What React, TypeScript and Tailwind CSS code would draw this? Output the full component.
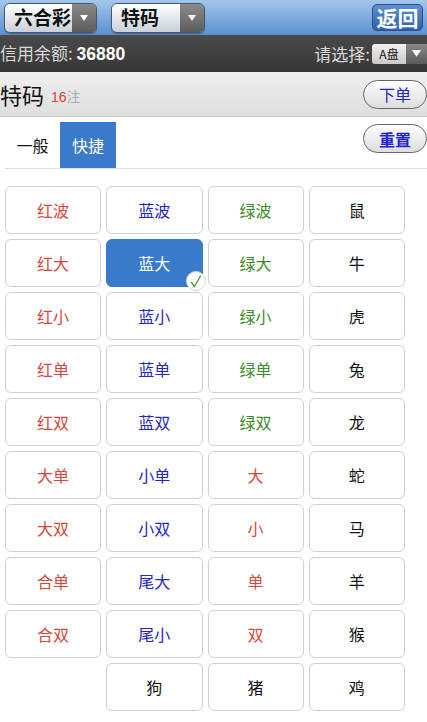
import React from "react";

const FONT = { fontFamily: '"Noto Sans CJK SC", "Noto Sans", sans-serif' };

type Cell = { t: string; c: string } | null;

const R = "text-[#d5473c]";
const B = "text-[#2525c0]";
const G = "text-[#3f8a2c]";
const K = "text-[#111]";

const rows: Cell[][] = [
  [{ t: "红波", c: R }, { t: "蓝波", c: B }, { t: "绿波", c: G }, { t: "鼠", c: K }],
  [{ t: "红大", c: R }, { t: "蓝大", c: B }, { t: "绿大", c: G }, { t: "牛", c: K }],
  [{ t: "红小", c: R }, { t: "蓝小", c: B }, { t: "绿小", c: G }, { t: "虎", c: K }],
  [{ t: "红单", c: R }, { t: "蓝单", c: B }, { t: "绿单", c: G }, { t: "兔", c: K }],
  [{ t: "红双", c: R }, { t: "蓝双", c: B }, { t: "绿双", c: G }, { t: "龙", c: K }],
  [{ t: "大单", c: R }, { t: "小单", c: B }, { t: "大", c: R }, { t: "蛇", c: K }],
  [{ t: "大双", c: R }, { t: "小双", c: B }, { t: "小", c: R }, { t: "马", c: K }],
  [{ t: "合单", c: R }, { t: "尾大", c: B }, { t: "单", c: R }, { t: "羊", c: K }],
  [{ t: "合双", c: R }, { t: "尾小", c: B }, { t: "双", c: R }, { t: "猴", c: K }],
  [null, { t: "狗", c: K }, { t: "猪", c: K }, { t: "鸡", c: K }],
];

function Arrow({ size = 8 }: { size?: number }) {
  return (
    <svg width={size} height={size * 0.75} viewBox="0 0 8 6">
      <path d="M0 0 L8 0 L4 6 Z" fill="#fff" />
    </svg>
  );
}

function TopSelect({ label, w }: { label: string; w: string }) {
  return (
    <div
      className={`flex h-[30px] ${w} overflow-hidden rounded-[6px] border border-[#4a5568] shadow-[0_1px_1px_rgba(0,0,0,0.3)]`}
    >
      <div className="flex flex-1 items-center bg-gradient-to-b from-[#ffffff] to-[#c9d0d8] pl-[9px] text-[19px] font-bold text-[#111]">
        {label}
      </div>
      <div className="flex w-[24px] items-center justify-center bg-gradient-to-b from-[#8a8a8a] to-[#5d5d5d]">
        <Arrow />
      </div>
    </div>
  );
}

export default function App() {
  return (
    <div className="min-h-[722px] w-[427px] overflow-hidden bg-white" style={FONT}>
      {/* blue header */}
      <div className="flex h-[35px] items-center bg-gradient-to-b from-[#a3c6ec] to-[#5b90cf] pl-[4px] pr-[4px]">
        <TopSelect label="六合彩" w="w-[93px]" />
        <div className="w-[14px]" />
        <TopSelect label="特码" w="w-[94px]" />
        <div className="flex-1" />
        <div className="flex h-[27px] w-[51px] items-center justify-center rounded-[5px] border border-[#2b4f86] bg-gradient-to-b from-[#5d8fd1] to-[#2f62aa] text-[21px] font-bold leading-none text-white">
          返回
        </div>
      </div>
      {/* dark bar */}
      <div className="flex h-[37px] items-center bg-gradient-to-b from-[#4a4a4a] to-[#363636] shadow-[0_2px_3px_rgba(0,0,0,0.35)]">
        <div className="text-[17px] text-[#d8d8d8]">
          信用余额:{" "}
          <span className="text-[17.5px] font-bold text-white" style={{ fontFamily: '"Liberation Sans", sans-serif' }}>
            36880
          </span>
        </div>
        <div className="flex-1" />
        <div className="text-[17px] text-[#d8d8d8]">请选择:</div>
        <div className="ml-[2px] flex h-[20px] w-[55px] overflow-hidden rounded-l-[3px]">
          <div className="flex w-[34px] items-center justify-center bg-gradient-to-b from-[#f2f2f2] to-[#c9c9c9] text-[12px] text-[#111]">
            A盘
          </div>
          <div className="flex flex-1 items-center justify-center bg-gradient-to-b from-[#888] to-[#5a5a5a]">
            <Arrow size={9} />
          </div>
        </div>
      </div>
      {/* gray title */}
      <div className="flex h-[45px] items-center border-b border-[#c8c8c8] bg-gradient-to-b from-[#efefef] to-[#dedede]">
        <div className="text-[22px] leading-none text-[#111]">特码</div>
        <div className="ml-[7px] mt-[4px] text-[14px] leading-none">
          <span className="text-[#e03a30]" style={{ fontFamily: '"Liberation Sans", sans-serif' }}>
            16
          </span>
          <span className="text-[#aaa]">注</span>
        </div>
        <div className="flex-1" />
        <div className="flex h-[29px] w-[64px] items-center justify-center rounded-full border border-[#666] bg-gradient-to-b from-[#ffffff] to-[#dcdcdc] text-[16px] text-[#2222d0]">
          下单
        </div>
      </div>
      {/* tabs */}
      <div className="ml-[5px] mt-[5px] flex h-[47px] items-stretch border-b border-[#dcdcdc]">
        <div className="flex w-[55px] items-center justify-center text-[16px] text-[#111]">一般</div>
        <div className="flex w-[56px] items-center justify-center bg-[#3a7acb] text-[16px] text-white">快捷</div>
        <div className="flex-1" />
        <div className="mt-[2px] flex h-[29px] w-[64px] items-center justify-center rounded-full border border-[#666] bg-gradient-to-b from-[#ffffff] to-[#dcdcdc] text-[16px] font-bold text-[#2222d0]">
          重置
        </div>
      </div>
      {/* grid */}
      <div className="ml-[5px] mt-[17px] grid w-[400px] grid-cols-4 gap-[5px]">
        {rows.flat().map((cell, i) => {
          if (!cell) return <div key={i} />;
          const sel = cell.t === "蓝大";
          return (
            <div
              key={i}
              className={`relative flex h-[48px] items-center justify-center rounded-[6px] border text-[16px] ${
                sel ? "border-[#3a7acb] bg-[#3a7acb] text-white" : `border-[#cfcfcf] bg-white ${cell.c}`
              }`}
            >
              {cell.t}
              {sel && (
                <div className="absolute right-[-4px] bottom-[-5px] flex h-[20px] w-[20px] items-center justify-center rounded-full border border-[#d8d8d8] bg-white">
                  <svg width="12" height="13" viewBox="0 0 12 13">
                    <path d="M1.5 7.5 L4.5 11.5 L10.5 1" fill="none" stroke="#3f9a2a" strokeWidth="1.3" strokeLinecap="round" strokeLinejoin="round" />
                  </svg>
                </div>
              )}
            </div>
          );
        })}
      </div>
    </div>
  );
}
